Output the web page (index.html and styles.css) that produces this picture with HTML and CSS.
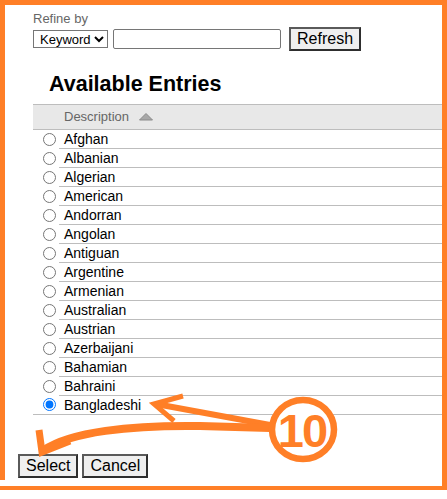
FILE: index.html
```html
<!DOCTYPE html>
<html>
<head>
<meta charset="utf-8">
<link rel="stylesheet" href="styles.css">
</head>
<body>
<div class="page">
  <div class="refine">Refine by</div>
  <div class="controls">
    <select class="kind"><option>Keyword</option></select>
    <input class="query" type="text">
    <button class="btn refresh">Refresh</button>
  </div>
  <h1 class="title">Available Entries</h1>
  <table class="entries">
    <thead>
      <tr>
        <th class="c-radio"></th>
        <th class="c-desc">Description <svg class="sort" width="14" height="8" viewBox="0 0 14 8"><polygon points="7,0.5 13.5,7 0.5,7" fill="#a8a8a8" stroke="#8a8a8a" stroke-width="1"/></svg></th>
      </tr>
    </thead>
    <tbody>
      <tr><td class="c-radio"><input type="radio" name="e"></td><td class="c-desc">Afghan</td></tr>
      <tr><td class="c-radio"><input type="radio" name="e"></td><td class="c-desc">Albanian</td></tr>
      <tr><td class="c-radio"><input type="radio" name="e"></td><td class="c-desc">Algerian</td></tr>
      <tr><td class="c-radio"><input type="radio" name="e"></td><td class="c-desc">American</td></tr>
      <tr><td class="c-radio"><input type="radio" name="e"></td><td class="c-desc">Andorran</td></tr>
      <tr><td class="c-radio"><input type="radio" name="e"></td><td class="c-desc">Angolan</td></tr>
      <tr><td class="c-radio"><input type="radio" name="e"></td><td class="c-desc">Antiguan</td></tr>
      <tr><td class="c-radio"><input type="radio" name="e"></td><td class="c-desc">Argentine</td></tr>
      <tr><td class="c-radio"><input type="radio" name="e"></td><td class="c-desc">Armenian</td></tr>
      <tr><td class="c-radio"><input type="radio" name="e"></td><td class="c-desc">Australian</td></tr>
      <tr><td class="c-radio"><input type="radio" name="e"></td><td class="c-desc">Austrian</td></tr>
      <tr><td class="c-radio"><input type="radio" name="e"></td><td class="c-desc">Azerbaijani</td></tr>
      <tr><td class="c-radio"><input type="radio" name="e"></td><td class="c-desc">Bahamian</td></tr>
      <tr><td class="c-radio"><input type="radio" name="e"></td><td class="c-desc">Bahraini</td></tr>
      <tr><td class="c-radio"><input type="radio" name="e" checked></td><td class="c-desc">Bangladeshi</td></tr>
    </tbody>
  </table>
  <div class="actions">
    <button class="btn">Select</button>
    <button class="btn">Cancel</button>
  </div>
</div>
<svg class="annot" width="447" height="499" viewBox="0 0 447 499">
  <g fill="#ff7f27">
    <rect x="0" y="0" width="447" height="5"/>
    <rect x="0" y="0" width="5" height="480"/>
    <rect x="442" y="0" width="5" height="490"/>
    <rect x="0" y="486" width="447" height="4"/>
  </g>
  <g fill="none" stroke="#ff7f27" stroke-linecap="butt" stroke-linejoin="miter">
    <path d="M270 425 L156 404" stroke-width="6"/>
    <path d="M183 396 L154 404 L174 421" stroke-width="5"/>
    <path d="M270 428 L200 426 C130 425 70 432 44 450" stroke-width="8"/>
    <path d="M39 430 L42 452 L70 441" stroke-width="7"/>
    <ellipse cx="303" cy="429.5" rx="31" ry="29.5" stroke-width="6.5" fill="#fff"/>
  </g>
  <text x="302" y="447" class="num">10</text>
</svg>
</body>
</html>
```
FILE: styles.css
```css
html, body {
  margin: 0;
  padding: 0;
  background: #fff;
}
body {
  width: 447px;
  height: 499px;
  position: relative;
  overflow: hidden;
  font-family: "Liberation Sans", Arial, sans-serif;
  color: #000;
}
.page {
  padding-top: 11px;
}
.refine {
  margin-left: 33px;
  font-size: 13px;
  line-height: 15px;
  color: #666;
}
.controls {
  margin-top: 1px;
  margin-left: 33px;
  height: 24px;
  display: flex;
  align-items: center;
}
.kind {
  width: 75px;
  height: 18px;
  font-family: "Liberation Sans", Arial, sans-serif;
  font-size: 13px;
  padding: 0 0 0 2px;
  border: 1px solid #767676;
  border-radius: 0;
  background: #fff;
  color: #000;
}
.query {
  margin: 0 0 0 5px;
  width: 168px;
  height: 20px;
  box-sizing: border-box;
  border: 1px solid #767676;
  border-radius: 2px;
  padding: 0 2px;
}
.btn {
  font-family: "Liberation Sans", Arial, sans-serif;
  font-size: 16px;
  line-height: 18px;
  padding: 1px 6px;
  margin: 0;
  border: 2px solid;
  border-color: #5a5a5a #2e2e2e #2e2e2e #5a5a5a;
  background: #efefef;
  color: #000;
  border-radius: 0;
}
.refresh {
  margin-left: 8px;
}
.title {
  margin: 21px 0 0 49px;
  font-size: 21.5px;
  line-height: 25px;
  font-weight: bold;
}
.entries {
  margin: 7px 0 0 33px;
  width: 414px;
  border-collapse: collapse;
  border-bottom: 1px solid #bdbdbd;
}
.entries thead tr {
  background: #e8e8e8;
  border-top: 1px solid #bdbdbd;
  border-bottom: 1px solid #bdbdbd;
}
.entries th {
  height: 24px;
  padding: 0;
  font-size: 13px;
  line-height: 24px;
  font-weight: normal;
  color: #666;
  text-align: left;
}
.entries th.c-desc {
  padding-left: 5px;
}
.sort {
  margin-left: 6px;
  vertical-align: 0px;
}
.entries td {
  padding: 0;
  height: 18px;
  font-size: 14px;
  line-height: 18px;
  vertical-align: middle;
}
.c-radio {
  width: 26px;
}
td.c-radio input {
  display: block;
  margin: 0 0 0 10px;
  width: 13px;
  height: 13px;
}
td.c-desc {
  padding-left: 5px;
  border-bottom: 1px solid #bdbdbd;
}
.actions {
  margin: 39px 0 0 18px;
  display: flex;
  gap: 4px;
}
.annot {
  position: absolute;
  left: 0;
  top: 0;
  pointer-events: none;
}
.num {
  font-family: "Liberation Sans", Arial, sans-serif;
  font-weight: bold;
  font-size: 47px;
  fill: #ff7f27;
  text-anchor: middle;
  letter-spacing: -2px;
}
```
